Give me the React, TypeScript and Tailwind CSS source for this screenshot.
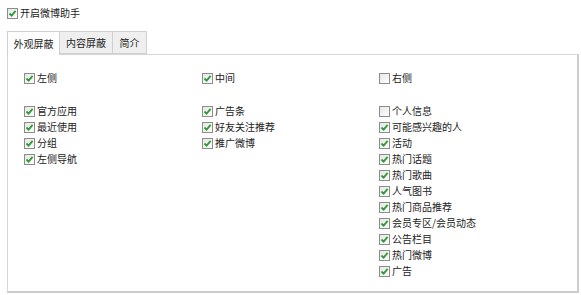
import React from "react";

const font = { fontFamily: '"Noto Sans CJK SC", "Noto Sans", sans-serif' };

function Box({ checked }: { checked: boolean }) {
  return (
    <span className="inline-flex h-[11px] w-[11px] shrink-0 items-center justify-center border border-[#8c8c8c] bg-gradient-to-br from-[#e6e6e6] to-white">
      {checked && (
        <svg width="9" height="9" viewBox="0 0 9 9">
          <path d="M1.5 4.5 L3.6 6.6 L7.6 1.8" fill="none" stroke="#2f9a35" strokeWidth="1.8" />
        </svg>
      )}
    </span>
  );
}

function Item({ label, checked = true }: { label: string; checked?: boolean }) {
  return (
    <div className="flex h-4 items-center gap-[2px] text-[10px] text-[#222]">
      <Box checked={checked} />
      <span className="leading-none">{label}</span>
    </div>
  );
}

const col1 = ["官方应用", "最近使用", "分组", "左侧导航"];
const col2 = ["广告条", "好友关注推荐", "推广微博"];
const col3: [string, boolean][] = [
  ["个人信息", false],
  ["可能感兴趣的人", true],
  ["活动", true],
  ["热门话题", true],
  ["热门歌曲", true],
  ["人气图书", true],
  ["热门商品推荐", true],
  ["会员专区/会员动态", true],
  ["公告栏目", true],
  ["热门微博", true],
  ["广告", true],
];

export default function App() {
  return (
    <div className="h-[295px] w-[581px] bg-white" style={font}>
      <div className="pl-[7px] pt-[5px]">
        <Item label="开启微博助手" />
      </div>
      <div className="mt-[10px] flex pl-[7px] text-[10px] text-[#222]">
        <div className="relative z-10 -mb-px flex h-[24px] w-[53px] items-center justify-center border border-b-0 border-[#cfcfcf] bg-white">
          外观屏蔽
        </div>
        <div className="flex h-[23px] w-[53px] items-center justify-center border border-l-0 border-[#cfcfcf] bg-[#efefef]">
          内容屏蔽
        </div>
        <div className="flex h-[23px] w-[34px] items-center justify-center border border-l-0 border-[#cfcfcf] bg-[#efefef]">
          简介
        </div>
      </div>
      <div className="mx-[7px] mr-[2px] h-[239px] border border-r-2 border-b-2 border-[#d6d6d6] border-r-[#cdcdcd] border-b-[#cdcdcd] pl-[16px] pt-[15px]">
        <div className="grid grid-cols-[178px_177px_1fr]">
          <Item label="左侧" />
          <Item label="中间" />
          <Item label="右侧" checked={false} />
        </div>
        <div className="mt-[17px] grid grid-cols-[178px_177px_1fr] items-start">
          <div>
            {col1.map((l) => (
              <Item key={l} label={l} />
            ))}
          </div>
          <div>
            {col2.map((l) => (
              <Item key={l} label={l} />
            ))}
          </div>
          <div>
            {col3.map(([l, c]) => (
              <Item key={l} label={l} checked={c} />
            ))}
          </div>
        </div>
      </div>
    </div>
  );
}
